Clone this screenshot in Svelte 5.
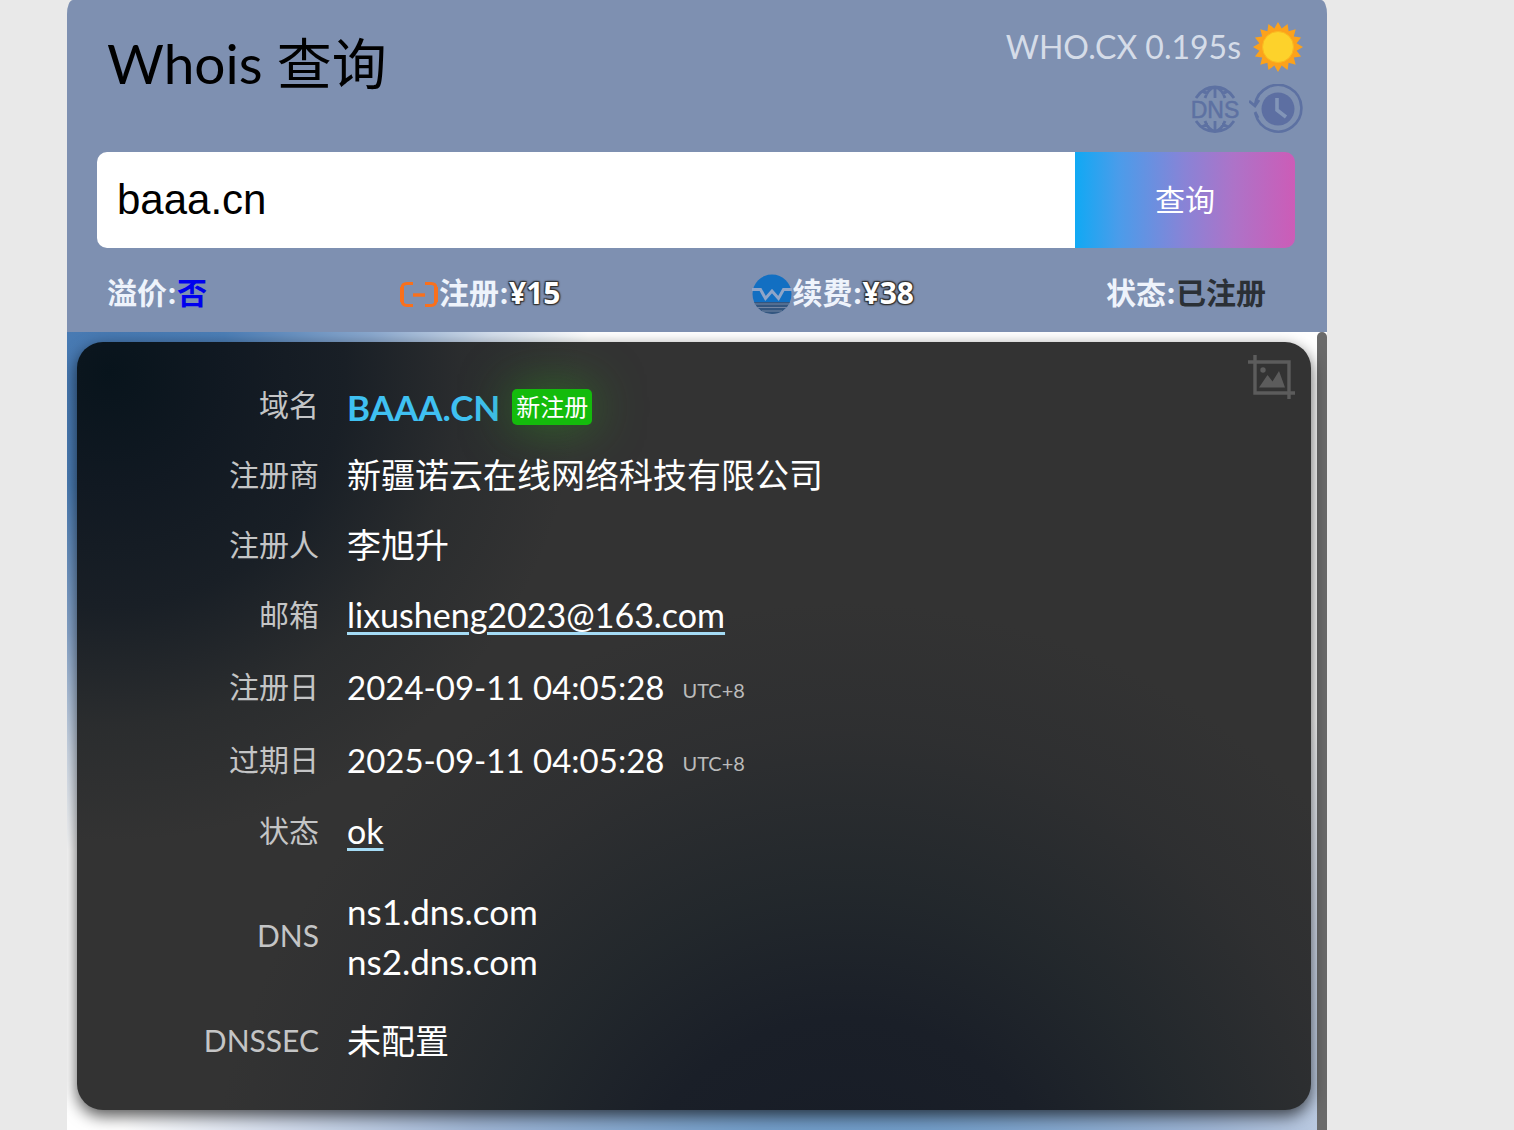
<script>
  const stats = [
    { label: '溢价:', value: '否', tone: 'no' },
    { label: '注册:', value: '¥15', tone: 'price', icon: 'bracket' },
    { label: '续费:', value: '¥38', tone: 'price', icon: 'west' },
    { label: '状态:', value: '已注册', tone: 'taken' }
  ];

  const servers = ['ns1.dns.com', 'ns2.dns.com'];

  // Sixteen-pointed outline used for the sun's rays
  const rays = Array.from({ length: 32 }, (_, i) => {
    const r = i % 2 ? 19 : 25;
    const a = (i * Math.PI) / 16 - Math.PI / 2;
    return `${(25 + r * Math.cos(a)).toFixed(1)},${(25 + r * Math.sin(a)).toFixed(1)}`;
  }).join(' ');

  let domain = $state('baaa.cn');
</script>

<main class="app">
  <header class="header">
    <div class="top">
      <h1>Whois 查询</h1>
      <div class="meta">
        <div class="meta-row">
          <span class="timing">WHO.CX 0.195s</span>
          <button class="icon-btn" type="button" aria-label="Theme">
            <svg width="50" height="50" viewBox="0 0 50 50">
              <polygon points={rays} fill="#fca21b" />
              <circle cx="25" cy="25" r="15.5" fill="#fdd22b" stroke="#fbb81f" stroke-width="1" />
            </svg>
          </button>
        </div>
        <div class="meta-row">
          <button class="icon-btn" type="button" aria-label="DNS">
            <svg width="50" height="50" viewBox="0 0 50 50" fill="none" stroke="#5d71a2" stroke-width="2.8">
              <path d="M5 14Q12 3 24 3t19 11M14 14Q17 5 24 3q7 2 10 11M24 3v11M11 7q3 2 6 2M37 7q-3 2-6 2" />
              <path d="M5 37q7 10.500 19 10.500T43 37M14 37q3 8.500 10 10.500 7-2 10-10.500M24 37v10.500M11 43q3-2 6-2M37 43q-3-2-6-2" />
              <text class="dns-text" x="24" y="33.500" text-anchor="middle" fill="#5d71a2" stroke="#5d71a2" stroke-width=".5">DNS</text>
            </svg>
          </button>
          <button class="icon-btn" type="button" aria-label="History">
            <svg width="54" height="50" viewBox="0 0 54 50" fill="none">
              <path d="M6 21A23.300 23.300 0 1 1 6.500 30" stroke="#5d71a2" stroke-width="2.600" />
              <path d="M0 17l6 5 4-6M6 28l3 6" stroke="#5d71a2" stroke-width="2.800" />
              <circle cx="29" cy="25" r="16.500" fill="#5d6fa2" />
              <path d="M28 14v12l9 7" stroke="#8295b8" stroke-width="3.600" />
            </svg>
          </button>
        </div>
      </div>
    </div>

    <form class="search" onsubmit={(e) => e.preventDefault()}>
      <input type="text" aria-label="域名" bind:value={domain} />
      <button type="submit">查询</button>
    </form>

    <div class="stats">
      {#each stats as s}
        <div class="stat">
          {#if s.icon === 'bracket'}
            <svg width="40" height="40" viewBox="0 0 40 40" fill="none" stroke="#f9701c">
              <path d="M14 9.500H8Q3 9.500 3 14v12q0 5.500 5 5.500h6M26 9.500h6q5 0 5 4.500v12q0 5.500-5 5.500h-6" stroke-width="3" />
              <path d="M14 21h12" stroke-width="3.400" />
              <path d="M3 13v15M37 13v15" stroke-width="4" />
            </svg>
          {:else if s.icon === 'west'}
            <svg width="40" height="40" viewBox="0 0 40 40">
              <circle cx="20" cy="20" r="19.500" fill="#126fc2" />
              <path d="M2 28h36a19.500 19.500 0 0 1-36 0z" fill="#34567f" />
              <path d="M2 30h36M5 33.500h30M10 37h20" stroke="#7385a3" stroke-width="1" />
              <path d="M0 15.500h8.500l5 9L20 17l6.500 7.500 5-9H40" fill="none" stroke="#8fa5c8" stroke-width="3" />
            </svg>
          {/if}
          <span>{s.label}</span><span class={s.tone}>{s.value}</span>
        </div>
      {/each}
    </div>
  </header>

  <div class="body">
    <section class="card">
      <button class="shot icon-btn" type="button" aria-label="截图">
        <svg width="48" height="46" viewBox="0 0 48 46" fill="none" stroke="#5c5c5c" stroke-width="3.400">
          <path d="M0 7h41v37M7 0v38h40" />
          <circle cx="15" cy="15" r="2.700" fill="#5c5c5c" stroke="none" />
          <path d="M11 32.500L19.500 20l5 6.500L31 16l6 16.500z" fill="#5c5c5c" stroke="none" />
        </svg>
      </button>
      <table>
        <tbody>
          <tr>
            <th scope="row">域名</th>
            <td><div class="inline"><span class="domain">BAAA.CN</span><span class="badge">新注册</span></div></td>
          </tr>
          <tr><th scope="row">注册商</th><td>新疆诺云在线网络科技有限公司</td></tr>
          <tr><th scope="row">注册人</th><td>李旭升</td></tr>
          <tr><th scope="row">邮箱</th><td><a href="mailto:lixusheng2023@163.com">lixusheng2023@163.com</a></td></tr>
          <tr class="date"><th scope="row">注册日</th><td>2024-09-11 04:05:28<small>UTC+8</small></td></tr>
          <tr class="date"><th scope="row">过期日</th><td>2025-09-11 04:05:28<small>UTC+8</small></td></tr>
          <tr><th scope="row">状态</th><td><a href="#ok">ok</a></td></tr>
          <tr class="servers">
            <th scope="row">DNS</th>
            <td>{#each servers as ns}<div class="server">{ns}</div>{/each}</td>
          </tr>
          <tr><th scope="row">DNSSEC</th><td>未配置</td></tr>
        </tbody>
      </table>
    </section>
    <div class="scrollbar"></div>
  </div>
</main>

<style>
  :global(body) {
    margin: 0;
    background: #e9e9e9;
    overflow: hidden;
  }
  .app {
    box-sizing: border-box;
    min-height: 100vh;
    max-height: 100vh;
    margin: 0 187px 0 67px;
    display: flex;
    flex-direction: column;
    font-family: Lato, "Noto Sans CJK SC", sans-serif;
  }
  .header {
    background: #7e90b1;
    border-radius: 6px 6px 0 0 / 14px 14px 0 0;
    padding: 22px 32px 16px 30px;
  }
  .top {
    display: flex;
    justify-content: space-between;
    padding-left: 10px;
    height: 130px;
  }
  h1 {
    margin: 0;
    font-size: 55px;
    line-height: 82px;
    font-weight: 400;
    color: #000;
  }
  .meta {
    margin-right: -8px;
    display: flex;
    flex-direction: column;
    gap: 12px;
  }
  .meta-row {
    display: flex;
    justify-content: flex-end;
    align-items: center;
    gap: 12px;
  }
  .meta-row + .meta-row {
    gap: 8px;
  }
  .timing {
    font-size: 32px;
    line-height: 50px;
    color: #d5dce8;
  }
  .icon-btn {
    border: 0;
    padding: 0;
    background: none;
    display: block;
    cursor: pointer;
  }
  svg {
    display: block;
    flex: none;
  }
  .dns-text {
    font-family: "Liberation Sans", sans-serif;
    font-size: 23px;
  }
  .search {
    display: flex;
    height: 96px;
    border-radius: 10px;
    overflow: hidden;
  }
  .search input {
    flex: 1;
    min-width: 0;
    border: 0;
    padding: 0 20px;
    outline: none;
    background: #fff;
    color: #000;
    font-family: "Liberation Sans", sans-serif;
    font-size: 42px;
  }
  .search button {
    width: 220px;
    border: 0;
    padding: 0 0 4px;
    color: #fff;
    font-family: inherit;
    font-size: 30px;
    background: linear-gradient(90deg, #10a9f4, #4b9cea 20%, #8983d6 50%, #ad73c8 72%, #cc5cb7);
  }
  .stats {
    display: flex;
    justify-content: space-between;
    padding: 22px 29px 0 10px;
    font-family: Inter, "Noto Sans CJK SC", sans-serif;
    font-size: 30px;
    line-height: 44px;
    font-weight: 700;
    color: #eef3fb;
  }
  .stat {
    display: flex;
    align-items: center;
    height: 46px;
  }
  .stat svg {
    margin-top: 2px;
  }
  .no {
    color: #0000ee;
  }
  .price {
    font-family: "Open Sans", "Noto Sans", sans-serif;
    color: #fff;
    text-shadow: 1px 1px 1px #333, -1px 1px 1px #333, 1px -1px 1px #333, -1px -1px 1px #333, 0 0 3px #333;
  }
  .taken {
    color: #2b3036;
  }
  .body {
    flex: 1;
    min-height: 0;
    overflow: hidden;
    display: flex;
    align-items: stretch;
    background:
      radial-gradient(circle 480px at 43px 40px, #4577b0 0%, #4c7eb6 25%, #8aa8ce 55%, #d3deec 80%, #fff0 100%),
      radial-gradient(circle 740px at 778px 960px, #5f93c4 0%, #739dc8 25%, #9fb5d4 55%, #d3dcec 80%, #fff0 100%),
      #fff;
  }
  .card {
    flex: 1;
    position: relative;
    margin: 10px 6px 20px 10px;
    box-sizing: border-box;
    padding: 29px 20px 35px 0;
    border-radius: 26px;
    background:
      radial-gradient(circle 470px at 33px 30px, #08141c 0%, #111922 25%, #151c24dd 50%, #23272a88 75%, #3330 100%),
      radial-gradient(circle 640px at 768px 900px, #161b26 0%, #1a1f28 35%, #20262bdd 55%, #2a2c2f88 80%, #3330 100%),
      #333;
    box-shadow: 0 6px 16px #000a;
    color: #fff;
  }
  .scrollbar {
    width: 10px;
    border-radius: 5px 5px 0 0;
    background: #6a6a6a;
  }
  .shot {
    position: absolute;
    top: 13px;
    right: 15px;
  }
  table {
    width: 100%;
    border-collapse: collapse;
  }
  tr {
    height: 70px;
  }
  .date {
    height: 73px;
  }
  .servers {
    height: 140px;
  }
  th {
    width: 242px;
    padding: 0 28px 4px 0;
    box-sizing: content-box;
    text-align: right;
    font-size: 30px;
    line-height: 44px;
    font-weight: 400;
    color: #c4c5c6;
  }
  td {
    padding: 0 0 2px;
    font-size: 34px;
    line-height: 50px;
    font-weight: 400;
  }
  .date td {
    font-size: 33px;
  }
  .inline {
    display: flex;
    align-items: center;
    gap: 12px;
    padding-top: 4px;
  }
  .domain {
    color: #3fc1f2;
    font-size: 35px;
    font-weight: 700;
  }
  .server {
    font-size: 35px;
  }
  .badge {
    padding: 0 4px;
    border-radius: 5px;
    background: #14bb0c;
    box-shadow: 0 0 50px #2f9a1e99;
    font-size: 24px;
    line-height: 36px;
  }
  a {
    color: #fff;
    text-decoration: underline #a4dbf5 3px;
    text-underline-offset: 4px;
  }
  small {
    margin-left: 18px;
    font-size: 20px;
    line-height: 20px;
    vertical-align: 2px;
    color: #bbb;
  }
</style>
